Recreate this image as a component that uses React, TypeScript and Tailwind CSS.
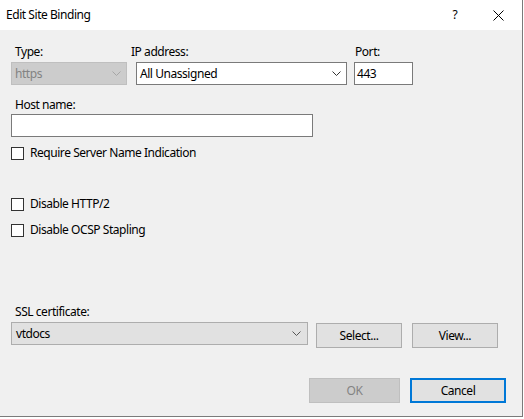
import React from "react"

function Chevron({ color }: { color: string }) {
  return (
    <svg width="9" height="5" viewBox="0 0 9 5" className="shrink-0">
      <path d="M0.5 0.5 L4.5 4.5 L8.5 0.5" fill="none" stroke={color} strokeWidth="1" />
    </svg>
  )
}

function Checkbox({ label, className = "" }: { label: string; className?: string }) {
  return (
    <label className={`flex items-center h-4 ${className}`}>
      <span className="w-[13px] h-[13px] border border-[#333333] bg-white shrink-0" />
      <span className="ml-[6px] text-[#000000]">{label}</span>
    </label>
  )
}

export default function App() {
  return (
    <div className="w-[524px] h-[419px] bg-white">
      <div
        className="w-[523px] h-[417px] bg-[#f0f0f0] border-r border-b border-[#7a7a7a] text-[12px] tracking-[-0.45px] leading-4 text-black"
        style={{ fontFamily: '"Noto Sans", "Segoe UI", sans-serif' }}
      >
        {/* title bar */}
        <div className="h-[30px] bg-white flex items-center pl-[6px]">
          <span>Edit Site Binding</span>
          <span className="ml-auto w-[10px] text-center">?</span>
          <svg width="11" height="11" viewBox="0 0 11 11" className="ml-[33px] mr-[18px]">
            <path d="M0.5 0.5 L10.5 10.5 M10.5 0.5 L0.5 10.5" stroke="#000" strokeWidth="1" />
          </svg>
        </div>

        <div className="pl-[11px] pt-[14px]">
          {/* type / ip / port */}
          <div className="flex">
            <div className="w-[116px]">
              <div className="pl-[4px]">Type:</div>
              <div className="mt-[2px] h-[23px] bg-[#cccccc] border border-[#bfbfbf] flex items-center pl-[3px] pr-[5px] text-[#838383]">
                <span className="flex-1">https</span>
                <Chevron color="#a6a6a6" />
              </div>
            </div>
            <div className="ml-[4px] w-[216px]">
              <div>IP address:</div>
              <div className="mt-[2px] ml-[5px] h-[23px] bg-white border border-[#7a7a7a] flex items-center pl-[3px] pr-[5px]">
                <span className="flex-1">All Unassigned</span>
                <Chevron color="#333333" />
              </div>
            </div>
            <div className="ml-[7px] w-[59px]">
              <div className="pl-[1px]">Port:</div>
              <div className="mt-[2px] h-[23px] bg-white border border-[#7a7a7a] flex items-center pl-[2px]">
                443
              </div>
            </div>
          </div>

          {/* host name */}
          <div className="mt-[12px] pl-[4px]">Host name:</div>
          <div className="mt-[1px] w-[302px] h-[23px] bg-white border border-[#7a7a7a]" />

          <Checkbox label="Require Server Name Indication" className="mt-[8px]" />
          <Checkbox label="Disable HTTP/2" className="mt-[35px]" />
          <Checkbox label="Disable OCSP Stapling" className="mt-[10px]" />

          {/* ssl */}
          <div className="mt-[66px] pl-[4px]">SSL certificate:</div>
          <div className="mt-[2px] flex items-start">
            <div className="w-[297px] h-[23px] bg-[#e1e1e1] border border-[#adadad] flex items-center pl-[4px] pr-[6px]">
              <span className="flex-1">vtdocs</span>
              <Chevron color="#555555" />
            </div>
            <button className="ml-[8px] mt-[1px] w-[86px] h-[25px] bg-[#e1e1e1] border border-[#adadad] flex items-center justify-center">
              Select...
            </button>
            <button className="ml-[10px] mt-[1px] w-[86px] h-[25px] bg-[#e1e1e1] border border-[#adadad] flex items-center justify-center">
              View...
            </button>
          </div>

          {/* ok / cancel */}
          <div className="mt-[30px] flex">
            <button className="ml-[298px] w-[91px] h-[25px] bg-[#cccccc] border border-[#bfbfbf] text-[#838383] flex items-center justify-center">
              OK
            </button>
            <button className="ml-[10px] w-[96px] h-[25px] bg-[#e1e1e1] border-2 border-[#0078d7] flex items-center justify-center">
              Cancel
            </button>
          </div>
        </div>
      </div>
    </div>
  )
}
